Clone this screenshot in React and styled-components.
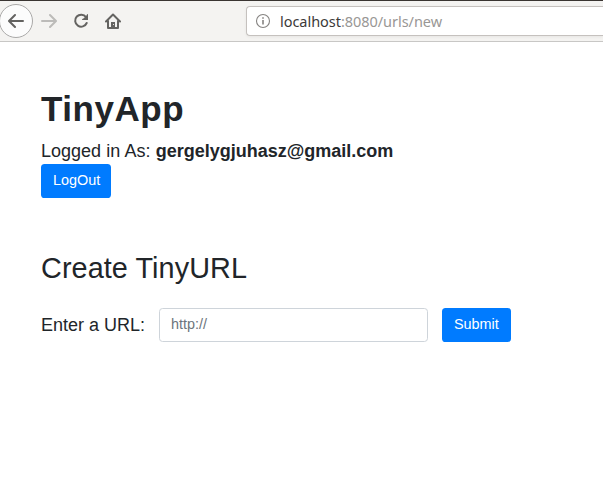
import React from 'react';
import styled, { createGlobalStyle } from 'styled-components';

const GlobalStyle = createGlobalStyle`
  * { box-sizing: border-box; }
  html, body { margin: 0; background: #fff; overflow: hidden; }
  body {
    color: #212529;
    font: 18px/27px "Liberation Sans", Arial, sans-serif;
  }
`;

const Toolbar = styled.header`
  display: flex;
  align-items: center;
  height: 42px;
  border-top: 1px solid #3a3532;
  border-bottom: 1px solid #c8c7c5;
  background: #f4f3f1;
`;

const NavButton = styled.button`
  display: flex;
  align-items: center;
  justify-content: center;
  flex: none;
  width: 32px;
  height: 34px;
  padding: 0;
  border: 0;
  background: transparent;
  color: ${({ $disabled }) => ($disabled ? '#bcbbb9' : '#646361')};
`;

const BackButton = styled(NavButton)`
  width: 34px;
  margin: 0 0 0 -1px;
  border: 1px solid #aaa9a8;
  border-radius: 50%;
  background: #fcfcfc;
`;

const AddressBar = styled.div`
  display: flex;
  align-items: center;
  flex: 1;
  height: 30px;
  margin-left: 117px;
  padding-left: 8px;
  border: 1px solid #c5c1be;
  border-right: 0;
  border-radius: 4px 0 0 4px;
  background: #fff;
  box-shadow: 0 1px 3px rgba(0, 0, 0, 0.06);
`;

const Address = styled.span`
  margin-left: 9px;
  color: #999795;
  font: 14.5px/20px "Noto Sans", sans-serif;
  letter-spacing: -0.04px;
  white-space: nowrap;
`;

const Host = styled.span`
  color: #3c3a39;
`;

const Page = styled.main`
  padding: 45px 41px 0;
`;

const Title = styled.h1`
  margin: 0;
  font-size: 35px;
  font-weight: 700;
  line-height: 43px;
  letter-spacing: 0.55px;
`;

const Account = styled.div`
  height: 26px;
  margin-top: 8px;
  word-spacing: 0.2px;
`;

const Button = styled.button`
  display: block;
  flex: none;
  width: ${({ $width }) => $width}px;
  height: 34px;
  padding: 0 0 2px 12px;
  border: 0;
  border-radius: 3.6px;
  background: #007bff;
  color: #fff;
  font: 14.4px/22px "Liberation Sans", Arial, sans-serif;
  text-align: left;
`;

const Subtitle = styled.h2`
  margin: 53px 0 22px;
  font-size: 28.8px;
  font-weight: 400;
  line-height: 35px;
  letter-spacing: 0.08px;
`;

const UrlForm = styled.form`
  display: flex;
  align-items: center;
`;

const Label = styled.label`
  width: 118px;
`;

const UrlInput = styled.input`
  width: 269px;
  height: 34px;
  margin: 0 14px 0 0;
  padding: 0 11px 2px;
  border: 1px solid #ced4da;
  border-radius: 3.6px;
  background: #fff;
  color: #495057;
  font: 14.4px "Liberation Sans", Arial, sans-serif;
  &::placeholder { color: #6c757d; opacity: 1; }
`;

const Icon = ({ children }) => (
  <svg width="16" height="16" viewBox="0 0 16 16" fill="none" stroke="currentColor"
    strokeWidth="2" strokeLinecap="round" strokeLinejoin="round">
    {children}
  </svg>
);

export default function App() {
  return (
    <>
      <GlobalStyle />
      <Toolbar>
        <BackButton aria-label="Back">
          <Icon><path d="M15 8H1.2M7 2L1 8l6 6" /></Icon>
        </BackButton>
        <NavButton aria-label="Forward" $disabled>
          <Icon><path d="M1 8h13.8M9 2l6 6-6 6" /></Icon>
        </NavButton>
        <NavButton aria-label="Reload">
          <Icon>
            <path d="M13 4.1A6 6 0 1 0 13.7 10" />
            <path d="M15 1v6H9z" fill="currentColor" stroke="none" />
            <path d="M14.4 1.8v4.6H9.8" strokeWidth="1.2" />
          </Icon>
        </NavButton>
        <NavButton aria-label="Home">
          <Icon>
            <path d="M1 8.5l7-7 7 7M3 8V15h10V8" />
            <path d="M6 15V9h4v6z" fill="currentColor" stroke="none" />
            <path d="M8.5 11.5h.1" stroke="#f4f3f1" strokeWidth="1" />
          </Icon>
        </NavButton>
        <AddressBar>
          <svg width="16" height="16" viewBox="0 0 16 16" fill="none" stroke="#858381">
            <circle cx="8" cy="8" r="6.5" strokeWidth="1.1" />
            <path d="M8 7v4.5M8 4.2v1.6" strokeWidth="1.6" />
          </svg>
          <Address><Host>localhost</Host>:8080/urls/new</Address>
        </AddressBar>
      </Toolbar>
      <Page>
        <Title>TinyApp</Title>
        <Account>Logged in As: <b>gergelygjuhasz@gmail.com</b></Account>
        <Button $width={70}>LogOut</Button>
        <Subtitle>Create TinyURL</Subtitle>
        <UrlForm onSubmit={(event) => event.preventDefault()}>
          <Label htmlFor="url">Enter a URL:</Label>
          <UrlInput id="url" placeholder="http://" />
          <Button $width={69} type="submit">Submit</Button>
        </UrlForm>
      </Page>
    </>
  );
}
